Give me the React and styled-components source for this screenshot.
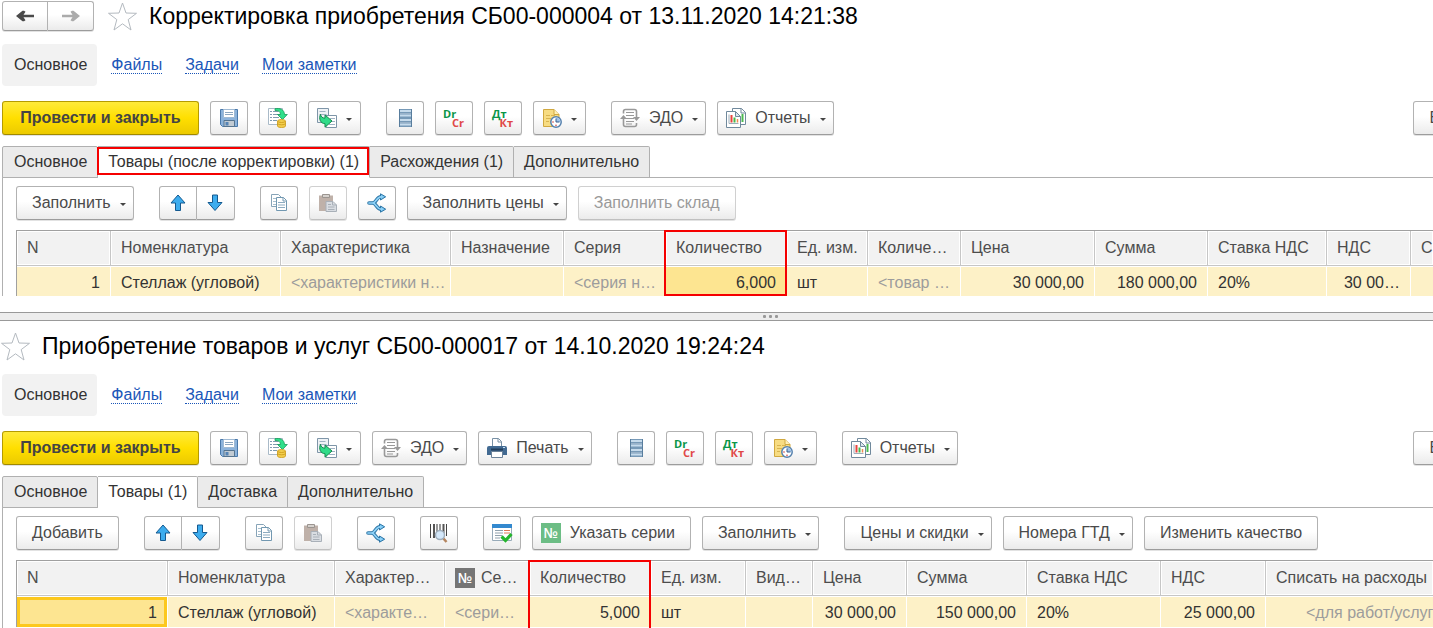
import React from 'react';
import styled, { createGlobalStyle, css } from 'styled-components';


const GlobalStyle = createGlobalStyle`
    *, *::after {
        box-sizing: border-box;
    }

    body {
        margin: 0;
        background-color: #ffffff;
        color: #333333;
        font-family: "Liberation Sans", Arial, sans-serif;
        font-size: 16px;
        line-height: 20px;
        overflow: hidden;
    }

    button {
        font: inherit;
        color: inherit;
    }
`

const Page = styled.main`
    display: flex;
    flex-direction: column;
    height: 100vh;
    overflow: hidden;
`

const Pane = styled.section`
    flex: none;
    padding-left: 2px;
    padding-top: ${({ $top }) => $top}px;
`

const TitleRow = styled.header`
    display: flex;
    align-items: center;
    height: 30px;
`

const Title = styled.h1`
    margin: 0 0 0 12px;
    color: #000000;
    font-size: 23px;
    font-weight: normal;
    line-height: 30px;
    white-space: nowrap;
`

const StarButton = styled.button`
    display: flex;
    padding: 0;
    border: 0;
    background: none;
    margin-left: ${({ $first }) => ($first ? '-2px' : '13px')};
`

const Sections = styled.nav`
    display: flex;
    align-items: center;
    gap: 23px;
    height: 42px;
    margin-top: 13px;
`

const SectionActive = styled.span`
    height: 42px;
    padding: 0 10px 0 12px;
    margin-right: -9px;
    border-radius: 4px;
    background-color: #f2f2f2;
    line-height: 42px;
`

const SectionLink = styled.a`
    color: #1a56b8;
    line-height: 16px;
    text-decoration: none;
    border-bottom: 1px dotted #1a56b8;
`

const Toolbar = styled.div`
    display: flex;
    margin-top: ${({ $inner }) => ($inner ? 8 : 15)}px;
    margin-right: ${({ $inner }) => ($inner ? 0 : -52)}px;
    gap: 25px;
`

const Group = styled.div`
    display: flex;
    gap: 11px;

    &:last-child:not(:first-child) {
        margin-left: ${({ $end }) => ($end ? 'auto' : 0)};
    }
`

const Joined = styled.div`
    display: flex;

    button:first-child {
        border-top-right-radius: 0;
        border-bottom-right-radius: 0;
    }

    button:last-child {
        border-left: 0;
        border-top-left-radius: 0;
        border-bottom-left-radius: 0;
    }
`

const ToolButton = styled.button`
    display: flex;
    flex: none;
    align-items: center;
    justify-content: center;
    gap: 9px;
    height: 34px;
    min-width: 38px;
    padding: 0 15px;
    border: 1px solid #b2b2b2;
    border-bottom-color: #9c9c9c;
    border-radius: 3px;
    background: linear-gradient(#ffffff 45%, #ebebeb);
    box-shadow: 0 1px 0 #e2e2e2;
    color: #4a4a4a;
    white-space: nowrap;

    ${({ $icon }) => $icon && css`
        padding-left: 8px;
    `}

    ${({ $menu }) => $menu && css`
        padding-right: 7px;
    `}

    ${({ $iconOnly }) => $iconOnly && css`
        padding: 0 8px;
    `}

    ${({ $primary }) => $primary && css`
        min-width: 197px;
        border-color: #b59b00;
        border-bottom-color: #a08900;
        background: linear-gradient(#ffea3a, #ffdf00 50%, #ecca00);
        color: #444444;
        font-weight: bold;
    `}

    &:disabled {
        border-color: #d0d0d0;
        border-bottom-color: #c0c0c0;
        color: #999999;
    }
`

const NavButton = styled(ToolButton)`
    height: 30px;
    min-width: 46px;
    padding: 0;
`

const Caret = styled.span`
    border: 3px solid transparent;
    border-top-color: #444444;
    border-bottom: 0;
    margin-top: 2px;
`

const Tabs = styled.div`
    display: flex;
    margin-top: 11px;
`

const Tab = styled.button`
    position: relative;
    height: 32px;
    padding: 0 10px;
    margin-bottom: -1px;
    border: 1px solid #b0b0b0;
    border-left-width: ${({ $first }) => ($first ? 1 : 0)}px;
    border-bottom-color: ${({ $active }) => ($active ? '#ffffff' : '#b0b0b0')};
    background-color: ${({ $active }) => ($active ? '#ffffff' : '#ebebeb')};
    border-top-left-radius: ${({ $first }) => ($first ? 2 : 0)}px;
    border-top-right-radius: 2px;
    line-height: 28px;
    white-space: nowrap;

    ${({ $first }) => $first && css`
        padding-left: 11px;
    `}

    ${({ $marked }) => $marked && css`
        &::after {
            content: '';
            position: absolute;
            inset: 0 0 2px -1px;
            border: 2px solid #f50000;
        }
    `}
`

const Panel = styled.div`
    border-top: 1px solid #b0b0b0;
    border-left: 1px solid #b0b0b0;
    padding-left: 13px;
`

const TableArea = styled.div`
    margin-top: 10px;
    height: ${({ $height }) => $height}px;
    overflow: hidden;
`

const Table = styled.table`
    width: 100%;
    table-layout: fixed;
    border-spacing: 0;
    border-top: 1px solid #a0a0a0;
    border-left: 1px solid #a0a0a0;
`

const HeadCell = styled.th`
    position: relative;
    height: 35px;
    padding: 0 10px;
    border-right: 1px solid #c6c6c6;
    border-bottom: 1px solid #c6c6c6;
    background-color: #f2f2f2;
    box-shadow: inset 0 0 0 1px #ffffff;
    color: #4d4d4d;
    font-weight: normal;
    text-align: left;
    white-space: nowrap;

    &:last-child {
        border-right: 0;
    }

    ${({ $marked }) => $marked && css`
        &::after {
            content: '';
            position: absolute;
            z-index: 1;
            top: -1px;
            left: -2px;
            right: -1px;
            height: ${({ $open }) => ($open ? 80 : 66)}px;
            border: 2px solid #f50000;
        }
    `}
`

const HeadLabel = styled.span`
    display: flex;
    align-items: center;
    gap: 6px;
`

const Cell = styled.td`
    height: 31px;
    padding: 1px 10px 0;
    border-top: 1px solid #ffffff;
    border-right: 1px solid #ffffff;
    background-color: ${({ $selected }) => ($selected ? '#fde591' : '#fdf1c7')};
    box-shadow: ${({ $focused }) => ($focused ? 'inset 0 0 0 3px #fcc81e' : 'none')};
    color: ${({ $muted }) => ($muted ? '#9c9c9c' : '#333333')};
    text-align: ${({ $align }) => $align || 'left'};
    white-space: nowrap;
    overflow: hidden;

    &:last-child {
        border-right: 0;
    }

    ${({ $indent }) => $indent && css`
        padding-left: 40px;
        padding-right: 0;
    `}
`

const NumberBadge = styled.span`
    display: inline-flex;
    align-items: center;
    justify-content: center;
    width: 20px;
    height: 20px;
    background-color: ${({ $color }) => $color};
    color: #ffffff;
    font-family: "Open Sans", sans-serif;
    font-size: 14px;
    font-weight: 600;
    line-height: 18px;
`

const Splitter = styled.div`
    display: flex;
    flex: none;
    align-items: center;
    justify-content: center;
    gap: 3px;
    height: 9px;
    margin-top: 16px;
    margin-right: -108px;
    border-top: 1px solid #999999;
    border-bottom: 1px solid #999999;
    background-color: #ededed;
`

const Dot = styled.span`
    width: 3px;
    height: 3px;
    border-radius: 1px;
    background-color: #999999;
`

const Svg = styled.svg`
    display: block;
    flex: none;
    overflow: visible;
`

const SvgLabel = styled.text`
    font-family: "Open Sans", sans-serif;
    font-size: 11px;
    font-weight: 700;
`


const Icon = ({ size = 20, children }) => (
    <Svg width={size} height={size} viewBox={`0 0 ${size} ${size}`} fill="none" aria-hidden="true">
        {children}
    </Svg>
);

const StarIcon = () => (
    <Svg width="30" height="30" viewBox="0 0 30 30" aria-hidden="true">
        <path d="M15.500 2l3.500 10 10.500.3-8.300 6.300 2.800 10.400-8.500-6.200-8.500 6.200 2.800-10.400-8.300-6.300 10.500-.3z" fill="#fff" stroke="#b4bac0" />
    </Svg>
);

const ArrowIcon = ({ right }) => (
    <Svg width="18" height="12" viewBox="0 0 18 12" aria-hidden="true">
        {right
            ? <path d="M0 4.700h10.500L8.500 1.800 10 .8h1.500L18 6l-6.500 5.200H10L8.500 10.200l2-2.900H0z" fill="#ababab" />
            : <path d="M18 4.700H7.500l2-2.900L8 .8H6.500L0 6l6.500 5.200H8l1.500-1-2-2.900H18z" fill="#4a4a4a" />}
    </Svg>
);

const SaveIcon = () => (
    <Icon>
        <path d="M1.500 1.500h17v17H3.500l-2-2z" fill="#8cb3dc" stroke="#4a79ab" />
        <path d="M4.500 1.500h11v8h-11z" fill="#fff" stroke="#9fb9d3" />
        <path d="M6 4.500h8M6 6.500h8" stroke="#8ba6c0" />
        <path d="M5 12.500h10.500v6H5z" fill="#c2cbd3" stroke="#56748f" />
        <path d="M6.500 14h3v3.500h-3z" fill="#5684b5" />
    </Icon>
);

const PostIcon = () => (
    <Icon>
        <path d="M.5.5h14v16H.5z" fill="#fff" stroke="#a9bac8" />
        <path d="M2 3.500h2M2 6.500h2M2 9.500h2M2 12.500h2M5 3.500h5M5 6.500h7M5 9.500h6M5 12.500h4" stroke="#7f9bb0" />
        <path d="M7 .7c5-.9 9.200.7 9.500 5.800h2.800L14.500 11.500 9.500 6.500h3C12.400 3.700 10.500 2.300 7 2.500z" fill="#2fe08a" stroke="#169a58" strokeWidth=".8" />
        <path d="M9.500 13.200c0-2.200 8-2.200 8 0V18c0 2-8 2-8 0z" fill="#f3cf4d" stroke="#c99818" strokeWidth=".8" />
        <path d="M9.500 13.300c1 1.600 7 1.600 8 0M9.500 15.600c1 1.600 7 1.600 8 0" stroke="#c99818" strokeWidth=".8" />
    </Icon>
);

const CreateFromIcon = () => (
    <Icon>
        <path d="M.5.5h11v14H.5z" fill="#eef2f5" stroke="#7e95a8" />
        <path d="M2.500 3.500h6M2.500 6.500h7" stroke="#9fb2c2" />
        <path d="M9 7.500h10.500v12H9z" fill="#fff" stroke="#7e95a8" />
        <path d="M13 10.500h5M14 13.500h4M12 16.500h6" stroke="#9fb2c2" />
        <path d="M3.500 6.300c.5 2.700 1.800 3.700 4.500 3.900V7l7 6-7 6.200v-3.500C3.500 15.500 1.500 11 3.500 6.300z" fill="#2fdc88" stroke="#15894e" />
    </Icon>
);

const RegisterIcon = () => (
    <Icon>
        {[1, 5.5, 10, 14.5].map((y) => (
            <g key={y}>
                <path d={`M4 ${y}h13v4.500H4z`} fill="#7699b7" />
                <path d={`M5 ${y + 1}h11v2H5z`} fill="#c6dbec" />
            </g>
        ))}
        <path d="M4.500 1v18M16.500 1v18" stroke="#587d9d" />
    </Icon>
);

const LettersIcon = ({ top, bottom }) => (
    <Icon>
        <SvgLabel x="-1" y="10" fill="#0a9648">{top}</SvgLabel>
        <SvgLabel x="20" y="19" textAnchor="end" fill="#e04848">{bottom}</SvgLabel>
    </Icon>
);

const ScheduleIcon = () => (
    <Icon>
        <path d="M1.500 1.500h10.500l5 5v12H1.500z" fill="#f7dc82" stroke="#d0a840" />
        <path d="M12 1.500v5h5" fill="#fff1b8" stroke="#d0a840" />
        <path d="M4 7.500h4M4 10.500h5M4 13.500h3M9 7.500h4" stroke="#d8b450" />
        <circle cx="14" cy="14" r="5.200" fill="#fff" stroke="#5581ae" strokeWidth="1.500" />
        <path d="M14 14V9.500A4.500 4.500 0 0 1 18.400 14z" fill="#9fc2e8" />
        <path d="M14 10.500V14h3.500" stroke="#365f8c" />
        <circle cx="11" cy="14" r=".8" fill="#d9423a" />
        <circle cx="14" cy="17.300" r=".8" fill="#d9423a" />
    </Icon>
);

const EdoIcon = () => (
    <Icon>
        <path d="M3.500 5.500V3.500q0-2 2-2h9q2 0 2 2V9M16.500 15v1.500q0 2-2 2h-9q-2 0-2-2V9" stroke="#999" strokeWidth="1.600" />
        <path d="M6 4.500h8M6 7.500h8M6 10.500h8M6 13.500h8M6 16h6" stroke="#999" strokeWidth="1.200" />
        <path d="M0 11l3.500-4L7 11zM13 9h7l-3.500 4z" fill="#999" />
    </Icon>
);

const ReportsIcon = () => (
    <Icon>
        <path d="M6.500.5h9l4 4v12h-13z" fill="#fff" stroke="#70899c" />
        <path d="M15 .5v4.500h4.500" stroke="#70899c" />
        <path d="M16.500 6v8" stroke="#4cba50" strokeWidth="2" />
        <path d="M.5 3.500h9l5 5v11H.5z" fill="#fff" stroke="#70899c" />
        <path d="M9.500 3.500v5h5z" fill="#dce6ee" stroke="#70899c" />
        <path d="M3 6.500V15.500h9.500" stroke="#9cadb9" />
        <path d="M5.500 7v7.500" stroke="#e8433c" strokeWidth="2" />
        <path d="M8.500 9.500v5" stroke="#47b84b" strokeWidth="2" />
        <path d="M11.500 11v3.500" stroke="#ef8a50" strokeWidth="1.500" />
    </Icon>
);

const PrintIcon = () => (
    <Icon>
        <path d="M5.500 9V.500h6l3 3V9" fill="#fff" stroke="#7890a5" />
        <path d="M11 .500V4h3.500" stroke="#7890a5" />
        <path d="M2 8h16a2 2 0 0 1 2 2v7H0v-7a2 2 0 0 1 2-2z" fill="#426a92" />
        <path d="M4 11.500h12" stroke="#233f5c" strokeWidth="2" />
        <path d="M4.500 13.500h11v6h-11z" fill="#fff" stroke="#6b8299" />
        <path d="M16 9.500h2" stroke="#c6dff5" />
    </Icon>
);

const MoveIcon = ({ down }) => (
    <Icon>
        {down
            ? <path d="M7.500 2h5v7.500h4.500L10 17.500 3 9.500h4.500z" fill="#3cacee" stroke="#14598f" strokeLinejoin="round" />
            : <path d="M7.500 17.500h5V10h4.500L10 2 3 10h4.500z" fill="#3cacee" stroke="#14598f" strokeLinejoin="round" />}
    </Icon>
);

const CopyIcon = () => (
    <Icon>
        <path d="M2.500 1.500h7l3 3v9h-10z" fill="#fff" stroke="#87a4b8" />
        <path d="M4 5.500h3M4 8.500h3M4 11.500h3" stroke="#a8bfce" />
        <path d="M7.500 4.500h7l3 3v10h-10z" fill="#fff" stroke="#7298b1" />
        <path d="M14 4.500v3.500h3.500" stroke="#7298b1" />
        <path d="M9 9.500h7M9 12h7M9 14.500h7" stroke="#8cabc0" />
    </Icon>
);

const PasteIcon = () => (
    <Icon>
        <path d="M1 2.500h14v15.500H1z" fill="#bfb1a9" />
        <path d="M4.500 1.500h7v3h-7z" fill="#d6d2ce" stroke="#9b9590" />
        <path d="M8 8.500h7l3.500 3.500v6.500H8z" fill="#d9dde2" stroke="#a9b0b8" />
        <path d="M14.500 8.500V12h4M10 11.500h3M10 14h6.500M10 16.500h6.500" stroke="#a9b0b8" />
    </Icon>
);

const SplitIcon = () => (
    <Icon>
        <path d="M2 10h3.500c4 0 4-6.200 8.500-6.200h1M5.500 10c4 0 4 6.200 8.500 6.200h1" stroke="#2e76a6" strokeWidth="3.600" strokeLinecap="round" />
        <path d="M13.500.8L18.700 3.800 13.500 7zM13.500 13l5.200 3.200-5.200 3z" fill="#7cc8f3" stroke="#2e76a6" strokeLinejoin="round" />
        <path d="M2 10h3.500c4 0 4-6.200 8.500-6.200h1M5.500 10c4 0 4 6.200 8.500 6.200h1" stroke="#8ed2f8" strokeWidth="1.700" strokeLinecap="round" />
    </Icon>
);

const BarcodeIcon = () => (
    <Icon>
        <path d="M1.500 1v14M17.500 1v12" stroke="#444" />
        <path d="M5 1v14M14.500 1v9" stroke="#555" strokeWidth="2" />
        <path d="M8 1v12M11 1v9" stroke="#777" strokeWidth="1.500" />
        <path d="M14 15l3.500 4" stroke="#b58660" strokeWidth="2.500" />
        <circle cx="11" cy="12" r="4.500" fill="#d4e8fa" stroke="#9faebc" strokeWidth="1.500" />
    </Icon>
);

const CheckListIcon = () => (
    <Icon>
        <path d="M.5 1.500h19v16H.5z" fill="#fff" stroke="#98abb9" />
        <path d="M0 1h20v4H0z" fill="#3389cf" />
        <path d="M3 7.500h8M3 10h8M3 12.500h7M3 15h5" stroke="#91a1ad" />
        <path d="M12 7.500h6M12 10h6" stroke="#e07a59" />
        <path d="M9.500 13.500l4 4 6-6.500" stroke="#25b52d" strokeWidth="3.200" />
    </Icon>
);


const Tool = ({ icon, text, menu, title, ...rest }) => (
    <ToolButton type="button" $icon={!!icon} $iconOnly={!text} $menu={menu} aria-label={text ? undefined : title} {...rest}>
        {icon}
        {text}
        {menu && <Caret />}
    </ToolButton>
);

const SaveTools = () => (
    <>
        <Tool text="Провести и закрыть" $primary />
        <Tool icon={<SaveIcon />} title="Записать" />
        <Tool icon={<PostIcon />} title="Провести" />
        <Tool icon={<CreateFromIcon />} title="Создать на основании" menu />
    </>
);

const RegisterTools = () => (
    <Group>
        <Tool icon={<RegisterIcon />} title="Движения" />
        <Tool icon={<LettersIcon top="Dr" bottom="Cr" />} title="Dr Cr" />
        <Tool icon={<LettersIcon top="Дт" bottom="Кт" />} title="Дт Кт" />
        <Tool icon={<ScheduleIcon />} title="Задачи" menu />
    </Group>
);

const EdoTool = () => <Tool icon={<EdoIcon />} text="ЭДО" menu />;

const ReportsTool = () => <Tool icon={<ReportsIcon />} text="Отчеты" menu />;

const MoreTools = () => (
    <Group $end>
        <Tool text="Еще" menu />
    </Group>
);

const MoveTools = () => (
    <Joined>
        <Tool icon={<MoveIcon />} title="Вверх" />
        <Tool icon={<MoveIcon down />} title="Вниз" />
    </Joined>
);

const DocumentTitle = ({ first, children }) => (
    <>
        <StarButton type="button" aria-label="В избранное" $first={first}>
            <StarIcon />
        </StarButton>
        <Title>{children}</Title>
    </>
);

const SectionNav = () => (
    <Sections>
        <SectionActive>Основное</SectionActive>
        <SectionLink href="#files">Файлы</SectionLink>
        <SectionLink href="#tasks">Задачи</SectionLink>
        <SectionLink href="#notes">Мои заметки</SectionLink>
    </Sections>
);

const TabBar = ({ tabs, marked }) => (
    <Tabs role="tablist">
        {tabs.map((name, i) => (
            <Tab
                key={name}
                type="button"
                role="tab"
                aria-selected={i === 1}
                $first={i === 0}
                $active={i === 1}
                $marked={marked && i === 1}
            >
                {name}
            </Tab>
        ))}
    </Tabs>
);

const Goods = ({ columns, height, open }) => (
    <TableArea $height={height}>
        <Table>
            <colgroup>
                {columns.map((c, i) => <col key={i} width={c.width} />)}
            </colgroup>
            <thead>
                <tr>
                    {columns.map((c, i) => (
                        <HeadCell key={i} $marked={c.marked} $open={open}>
                            <HeadLabel>
                                {c.badge && <NumberBadge $color="#757575">№</NumberBadge>}
                                {c.name}
                            </HeadLabel>
                        </HeadCell>
                    ))}
                </tr>
            </thead>
            <tbody>
                <tr>
                    {columns.map((c, i) => (
                        <Cell
                            key={i}
                            $align={c.align}
                            $muted={c.muted}
                            $selected={c.selected || c.focused}
                            $focused={c.focused}
                            $indent={c.indent}
                        >
                            {c.value}
                        </Cell>
                    ))}
                </tr>
            </tbody>
        </Table>
    </TableArea>
);

const correctionColumns = [
    { name: 'N', value: '1', width: 94, align: 'right' },
    { name: 'Номенклатура', value: 'Стеллаж (угловой)', width: 170 },
    { name: 'Характеристика', value: '<характеристики н…', width: 170, muted: true },
    { name: 'Назначение', value: '', width: 113 },
    { name: 'Серия', value: '<серия н…', width: 102, muted: true },
    { name: 'Количество', value: '6,000', width: 121, align: 'right', selected: true, marked: true },
    { name: 'Ед. изм.', value: 'шт', width: 81 },
    { name: 'Количе…', value: '<товар …', width: 93, muted: true },
    { name: 'Цена', value: '30 000,00', width: 134, align: 'right' },
    { name: 'Сумма', value: '180 000,00', width: 113, align: 'right' },
    { name: 'Ставка НДС', value: '20%', width: 119 },
    { name: 'НДС', value: '30 00…', width: 84, align: 'right' },
    { name: 'С', value: '' },
];

const purchaseColumns = [
    { name: 'N', value: '1', width: 151, align: 'right', focused: true },
    { name: 'Номенклатура', value: 'Стеллаж (угловой)', width: 167 },
    { name: 'Характер…', value: '<характе…', width: 110, muted: true },
    { name: 'Се…', value: '<сери…', width: 85, muted: true, badge: true },
    { name: 'Количество', value: '5,000', width: 121, align: 'right', marked: true },
    { name: 'Ед. изм.', value: 'шт', width: 95 },
    { name: 'Вид…', value: '', width: 67 },
    { name: 'Цена', value: '30 000,00', width: 94, align: 'right' },
    { name: 'Сумма', value: '150 000,00', width: 120, align: 'right' },
    { name: 'Ставка НДС', value: '20%', width: 134 },
    { name: 'НДС', value: '25 000,00', width: 105, align: 'right' },
    { name: 'Списать на расходы', value: '<для работ/услуг б', muted: true, indent: true },
];


const App = () => {
    return (
        <Page>
            <GlobalStyle />
            <Pane $top={1}>
                <TitleRow>
                    <Joined>
                        <NavButton type="button" aria-label="Назад"><ArrowIcon /></NavButton>
                        <NavButton type="button" aria-label="Вперед"><ArrowIcon right /></NavButton>
                    </Joined>
                    <DocumentTitle>Корректировка приобретения СБ00-000004 от 13.11.2020 14:21:38</DocumentTitle>
                </TitleRow>
                <SectionNav />
                <Toolbar>
                    <Group><SaveTools /></Group>
                    <RegisterTools />
                    <Group>
                        <EdoTool />
                        <ReportsTool />
                    </Group>
                    <MoreTools />
                </Toolbar>
                <TabBar tabs={['Основное', 'Товары (после корректировки) (1)', 'Расхождения (1)', 'Дополнительно']} marked />
                <Panel>
                    <Toolbar $inner>
                        <Tool text="Заполнить" menu />
                        <MoveTools />
                        <Group>
                            <Tool icon={<CopyIcon />} title="Скопировать" />
                            <Tool icon={<PasteIcon />} title="Вставить" disabled />
                            <Tool icon={<SplitIcon />} title="Разбить строку" />
                            <Tool text="Заполнить цены" menu />
                            <Tool text="Заполнить склад" disabled />
                        </Group>
                    </Toolbar>
                    <Goods columns={correctionColumns} height={66} />
                </Panel>
            </Pane>
            <Splitter>
                <Dot />
                <Dot />
                <Dot />
            </Splitter>
            <Pane $top={10}>
                <TitleRow>
                    <DocumentTitle first>Приобретение товаров и услуг СБ00-000017 от 14.10.2020 19:24:24</DocumentTitle>
                </TitleRow>
                <SectionNav />
                <Toolbar>
                    <Group>
                        <SaveTools />
                        <EdoTool />
                        <Tool icon={<PrintIcon />} text="Печать" menu />
                    </Group>
                    <RegisterTools />
                    <ReportsTool />
                    <MoreTools />
                </Toolbar>
                <TabBar tabs={['Основное', 'Товары (1)', 'Доставка', 'Дополнительно']} />
                <Panel>
                    <Toolbar $inner>
                        <Tool text="Добавить" />
                        <MoveTools />
                        <Group>
                            <Tool icon={<CopyIcon />} title="Скопировать" />
                            <Tool icon={<PasteIcon />} title="Вставить" disabled />
                        </Group>
                        <Tool icon={<SplitIcon />} title="Разбить строку" />
                        <Tool icon={<BarcodeIcon />} title="Поиск по штрихкоду" />
                        <Group>
                            <Tool icon={<CheckListIcon />} title="Проверить" />
                            <Tool icon={<NumberBadge $color="#6cbd85">№</NumberBadge>} text="Указать серии" />
                            <Tool text="Заполнить" menu />
                        </Group>
                        <Group>
                            <Tool text="Цены и скидки" menu />
                            <Tool text="Номера ГТД" menu />
                            <Tool text="Изменить качество" />
                        </Group>
                    </Toolbar>
                    <Goods columns={purchaseColumns} height={68} open />
                </Panel>
            </Pane>
        </Page>
    );
};

export default App;
